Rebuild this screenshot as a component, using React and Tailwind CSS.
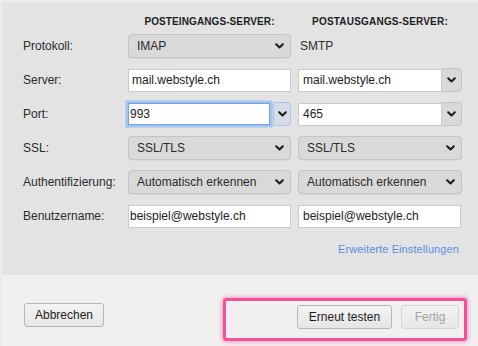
import React from 'react';

// Small bold chevron used by the popup buttons and combo boxes
function Chevron() {
  return (
    <svg width="9" height="6" viewBox="0 0 9 6" fill="none" className="flex-shrink-0">
      <path d="M1.2 1.2l3.3 3.3 3.3-3.3" stroke="#1a1a1a" strokeWidth="2" strokeLinecap="round" strokeLinejoin="round" />
    </svg>
  );
}

function Select({ value }) {
  return (
    <div className="h-[24px] w-full rounded-[4px] border border-[#c4c4c4] bg-[#d9d9d9] flex items-center justify-between pl-[8px] pr-[6px] text-[#2a2a2a] shadow-[0_0.5px_0_rgba(0,0,0,0.08)]">
      <span>{value}</span>
      <Chevron />
    </div>
  );
}

function Input({ value, pad = 'pl-[3px]' }) {
  return (
    <div className={`h-[23px] w-full bg-white border border-[#cbcbcb] flex items-center ${pad} text-[#222]`}>
      {value}
    </div>
  );
}

function Combo({ value, focused }) {
  if (focused) {
    return (
      <div className="h-[24px] w-full flex items-center">
        <div className="h-[22px] flex-1 bg-white border border-[#6fa3ea] shadow-[0_0_0_2.5px_#a3c4f1] flex items-center pl-[1px] text-[#222]">
          {value}
        </div>
        <div className="h-[24px] w-[18px] ml-[3px] rounded-r-[4px] border border-[#a9c6ee] bg-[#d7dde6] flex items-center justify-center">
          <Chevron />
        </div>
      </div>
    );
  }
  return (
    <div className="h-[24px] w-full flex items-center">
      <div className="h-[23px] flex-1 bg-white border border-[#cbcbcb] flex items-center pl-[4px] text-[#222]">
        {value}
      </div>
      <div className="h-[24px] w-[20px] rounded-r-[4px] border border-l-0 border-[#c4c4c4] bg-[#d9d9d9] flex items-center justify-center">
        <Chevron />
      </div>
    </div>
  );
}

function Label({ children }) {
  return <div className="text-[#2b2b2b]">{children}</div>;
}

function Button({ children, disabled, className = '' }) {
  return (
    <button
      className={`h-[24px] rounded-[3px] border flex items-center justify-center text-[12px] bg-gradient-to-b from-[#f3f3f3] to-[#e6e6e6] ${
        disabled ? 'border-[#d6d6d6] text-[#a4a4a4]' : 'border-[#b7b7b7] text-[#1d1d1d]'
      } ${className}`}
    >
      {children}
    </button>
  );
}

export default function App() {
  return (
    <div
      className="w-[478px] h-[346px] bg-[#e3e3e3] flex flex-col overflow-hidden border-t-2 border-l-2 border-[#ececec] text-[12px]"
      style={{ fontFamily: '"Liberation Sans", Arial, sans-serif' }}
    >
      <div className="h-[273px] pl-[21px] pt-[12px]">
        <div className="grid grid-cols-[98px_163px_164px] gap-x-[7px] grid-rows-[15px_repeat(6,34px)] items-center">
          <div />
          <div className="text-center text-[10px] font-bold tracking-[0.1px] text-[#1e1e1e]">POSTEINGANGS-SERVER:</div>
          <div className="text-center text-[10px] font-bold tracking-[0.2px] text-[#1e1e1e]">POSTAUSGANGS-SERVER:</div>

          <Label>Protokoll:</Label>
          <Select value="IMAP" />
          <div className="pl-[2px] text-[#2b2b2b]">SMTP</div>

          <Label>Server:</Label>
          <Input value="mail.webstyle.ch" />
          <Combo value="mail.webstyle.ch" />

          <Label>Port:</Label>
          <Combo value="993" focused />
          <Combo value="465" />

          <Label>SSL:</Label>
          <Select value="SSL/TLS" />
          <Select value="SSL/TLS" />

          <Label>Authentifizierung:</Label>
          <Select value="Automatisch erkennen" />
          <Select value="Automatisch erkennen" />

          <Label>Benutzername:</Label>
          <Input value="beispiel@webstyle.ch" pad="pl-[1px]" />
          <div className="pr-[1px]">
            <Input value="beispiel@webstyle.ch" pad="pl-[4px]" />
          </div>
        </div>

        <div className="mt-[9px] flex justify-end pr-[19px]">
          <span className="text-[11px] tracking-[0.1px] text-[#5a8fe4] leading-[14px]">Erweiterte Einstellungen</span>
        </div>
      </div>

      {/* Footer bar */}
      <div className="flex-1 bg-[#f0f0f0] flex items-start pl-[22px] pr-[11px]">
        <Button className="mt-[28px] w-[80px]">Abbrechen</Button>
        <div className="ml-auto mt-[23px] w-[244px] h-[43px] rounded-[3px] border-[3px] border-[#f7509b] shadow-[0_0_4px_1px_rgba(247,80,155,0.55)] flex justify-end items-start gap-[9px] pt-[4px] pr-[5px]">
          <Button className="w-[95px]">Erneut testen</Button>
          <Button disabled className="w-[58px]">Fertig</Button>
        </div>
      </div>
    </div>
  );
}
